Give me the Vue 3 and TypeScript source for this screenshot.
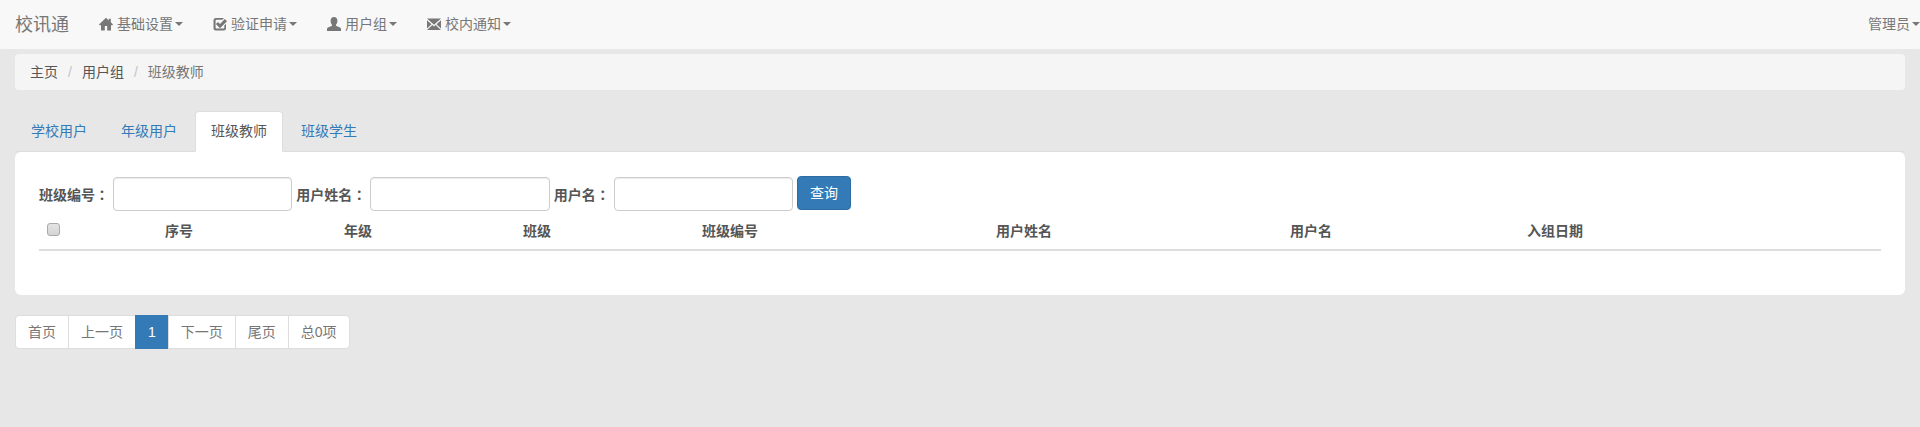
<template>
  <div class="page">
    <nav class="navbar">
      <a class="brand">校讯通</a>
      <ul class="nav-list">
        <li v-for="item in menus" :key="item.label" class="nav-item">
          <svg class="nav-icon" viewBox="0 0 14 14" aria-hidden="true">
            <path v-if="item.icon === 'home'" d="M7 .8 0 7.400l.6.8H2v5.300h3.800V9.100h2.400v4.400H12V8.200h1.400l.6-.8-2.200-2.100V1.800H9.800v1.600L7 .8Z" />
            <path v-else-if="item.icon === 'check'" fill-rule="evenodd" d="M3 1h8l-1.700 1.700H3.300c-.4 0-.7.300-.7.700v7.300c0 .4.300.7.700.7h7.300c.4 0 .7-.3.7-.7V8.400L13 6.700V11a2.500 2.500 0 0 1-2.500 2.500H3A2.500 2.500 0 0 1 .5 11V3.500A2.500 2.500 0 0 1 3 1ZM5 4.900l2 2L11.800 2 14 4.200 7 11.200 2.800 7 5 4.900Z" />
            <path v-else-if="item.icon === 'user'" d="M7 0c2.100 0 3.400 1.600 3.400 3.900 0 1.500-.6 2.900-1.300 3.700-.4.500-.2 1.100.4 1.400l2.900 1.300c1 .4 1.600 1.100 1.600 2V14H0v-1.700c0-.9.600-1.600 1.600-2L4.500 9c.6-.3.800-.9.400-1.400C4.200 6.800 3.600 5.400 3.600 3.900 3.600 1.600 4.900 0 7 0Z" />
            <path v-else d="M0 1.500h14L7 7.700 0 1.500Zm0 1.700 4.500 4L0 11.500V3.200Zm14 0v8.300l-4.500-4.300 4.500-4ZM5.400 8l1.600 1.400L8.600 8l5.300 5H.1l5.300-5Z" />
          </svg>
          <span>{{ item.label }}</span>
          <i class="caret"></i>
        </li>
      </ul>
      <div class="nav-user">
        <span>管理员</span>
        <i class="caret"></i>
      </div>
    </nav>

    <ol class="breadcrumb">
      <li v-for="crumb in crumbs" :key="crumb" class="crumb">{{ crumb }}</li>
    </ol>

    <ul class="tabs">
      <li v-for="tab in tabs" :key="tab" class="tab" :class="{ active: tab === activeTab }">{{ tab }}</li>
    </ul>

    <section class="panel">
      <form class="search-form" @submit.prevent>
        <template v-for="field in fields" :key="field.id">
          <label :for="field.id">{{ field.label }}<span class="colon">：</span></label>
          <input :id="field.id" class="field" type="text" />
        </template>
        <button class="search-btn" type="submit">查询</button>
      </form>
      <table class="grid">
        <colgroup>
          <col class="col-check" />
          <col class="col-short" />
          <col class="col-short" />
          <col class="col-short" />
          <col class="col-wide" />
          <col class="col-wide" />
          <col class="col-user" />
          <col />
        </colgroup>
        <thead>
          <tr>
            <th class="check-cell"><input type="checkbox" /></th>
            <th v-for="col in columns" :key="col">{{ col }}</th>
          </tr>
        </thead>
      </table>
    </section>

    <ul class="pagination">
      <li v-for="page in pages" :key="page" class="page-item" :class="{ active: page === '1' }">{{ page }}</li>
    </ul>
  </div>
</template>

<script setup lang="ts">
const menus = [
  { label: '基础设置', icon: 'home' },
  { label: '验证申请', icon: 'check' },
  { label: '用户组', icon: 'user' },
  { label: '校内通知', icon: 'envelope' },
];
const crumbs = ['主页', '用户组', '班级教师'];
const tabs = ['学校用户', '年级用户', '班级教师', '班级学生'];
const activeTab = '班级教师';
const fields = [
  { id: 'classNo', label: '班级编号' },
  { id: 'realName', label: '用户姓名' },
  { id: 'userName', label: '用户名' },
];
const columns = ['序号', '年级', '班级', '班级编号', '用户姓名', '用户名', '入组日期'];
const pages = ['首页', '上一页', '1', '下一页', '尾页', '总0项'];
</script>

<style>
body {
  background: #e7e7e7;
}
</style>

<style scoped>
.page {
  height: 427px;
  overflow: hidden;
  font-family: "Liberation Sans", "Noto Sans CJK SC", sans-serif;
  font-size: 14px;
  line-height: 20px;
  color: #555;
}

/* top bar */
.navbar {
  display: flex;
  align-items: center;
  height: 49px;
  background: #f8f8f8;
  color: #777;
}
.brand {
  padding: 0 15px;
  font-size: 18px;
}
.nav-list {
  display: flex;
  list-style: none;
  margin: 0 0 1px;
  padding: 0;
}
.nav-item {
  display: flex;
  align-items: center;
  padding: 0 15px;
}
.nav-icon {
  width: 14px;
  height: 14px;
  margin-right: 4px;
  fill: #777;
}
.caret {
  display: inline-block;
  width: 0;
  height: 0;
  margin-left: 2px;
  border-top: 4px solid #777;
  border-left: 4px solid transparent;
  border-right: 4px solid transparent;
}
.nav-user {
  display: flex;
  align-items: center;
  margin: 0 0 1px auto;
}

/* breadcrumb */
.breadcrumb {
  display: flex;
  list-style: none;
  margin: 5px 15px 0;
  padding: 8px 15px;
  background: #f5f5f5;
  border-radius: 4px;
}
.crumb:not(:first-child)::before {
  content: "/";
  padding: 0 10px;
  color: #c4c4c4;
}
.crumb:last-child {
  color: #777;
}

/* tabs */
.tabs {
  display: flex;
  list-style: none;
  margin: 21px 15px 0;
  padding: 0;
  gap: 2px;
  height: 40px;
  border-bottom: 1px solid #ddd;
}
.tab {
  height: 41px;
  box-sizing: border-box;
  padding: 9px 15px;
  border: 1px solid transparent;
  border-radius: 4px 4px 0 0;
  color: #337ab7;
}
.tab.active {
  background: #fff;
  border-color: #ddd #ddd #fff;
  color: #555;
}

/* panel with form and table */
.panel {
  height: 143px;
  box-sizing: border-box;
  margin: 0 15px;
  padding: 25px 24px 0;
  background: #fff;
  border-radius: 6px;
}
.search-form {
  display: flex;
  align-items: center;
  gap: 4px;
}
.search-form label {
  font-weight: 700;
}
.colon {
  font-family: "Noto Sans CJK TC", sans-serif;
}
.field {
  width: 179.330px;
  height: 34px;
  box-sizing: border-box;
  padding: 6px 12px;
  border: 1px solid #ccc;
  border-radius: 4px;
  box-shadow: inset 0 1px 1px rgba(0, 0, 0, 0.075);
  outline: none;
}
.search-btn {
  height: 34px;
  margin: -1px 0 1px;
  padding: 0 12px;
  border: 1px solid #2e6da4;
  border-radius: 4px;
  background: #337ab7;
  color: #fff;
  font: inherit;
}
.grid {
  width: 100%;
  margin-top: 2px;
  table-layout: fixed;
  border-collapse: collapse;
}
.grid th {
  padding: 8px 0;
  text-align: left;
  vertical-align: bottom;
  border-bottom: 2px solid #ddd;
}
.grid .check-cell {
  padding-left: 8px;
  vertical-align: top;
}
.check-cell input {
  display: block;
  appearance: none;
  width: 13px;
  height: 13px;
  box-sizing: border-box;
  margin: 2px 0 0;
  border: 1px solid #aaa;
  border-radius: 3px;
  background: linear-gradient(#e4e4e4, #d4d4d4);
}
.col-check {
  width: 126px;
}
.col-short {
  width: 179px;
}
.col-wide {
  width: 294px;
}
.col-user {
  width: 237px;
}

/* pagination */
.pagination {
  display: flex;
  list-style: none;
  margin: 20px 15px 0;
  padding: 0;
  color: #777;
}
.page-item {
  padding: 6px 12px;
  background: #fff;
  border: 1px solid #ddd;
  margin-left: -1px;
}
.page-item:first-child {
  margin-left: 0;
  border-radius: 4px 0 0 4px;
}
.page-item:last-child {
  border-radius: 0 4px 4px 0;
}
.page-item.active {
  background: #337ab7;
  border-color: #337ab7;
  color: #fff;
}
</style>
